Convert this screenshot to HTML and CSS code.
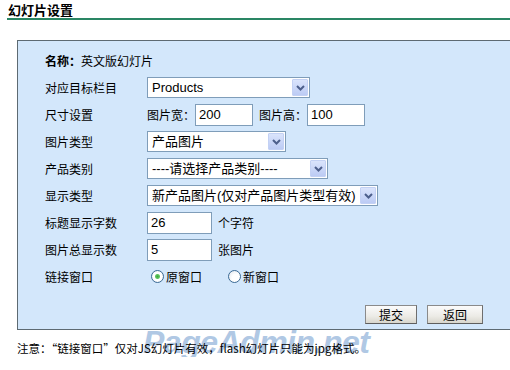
FILE: index.html
```html
<!DOCTYPE html>
<html lang="zh-CN">
<head>
    <meta charset="UTF-8">
    <title>幻灯片设置</title>
    <link rel="stylesheet" href="styles.css">
</head>
<body>
    <div class="page-title">幻灯片设置</div>

    <div class="panel">
        <div class="form">
            <div class="row name-row"><b>名称：</b>英文版幻灯片</div>

            <div class="row">
                <span class="label">对应目标栏目</span>
                <span class="select sel-column">
                    <select><option>Products</option></select>
                    <span class="arrow"><svg width="9" height="6" viewBox="0 0 9 6"><path d="M1 1 L4.5 4.5 L8 1" fill="none" stroke="#4d5f8c" stroke-width="2"/></svg></span>
                </span>
            </div>

            <div class="row">
                <span class="label">尺寸设置</span>
                <span class="field">图片宽：<input class="text w-size" type="text" value="200"></span>
                <span class="field gap">图片高：<input class="text w-size" type="text" value="100"></span>
            </div>

            <div class="row">
                <span class="label">图片类型</span>
                <span class="select sel-type">
                    <select><option>产品图片</option></select>
                    <span class="arrow"><svg width="9" height="6" viewBox="0 0 9 6"><path d="M1 1 L4.5 4.5 L8 1" fill="none" stroke="#4d5f8c" stroke-width="2"/></svg></span>
                </span>
            </div>

            <div class="row">
                <span class="label">产品类别</span>
                <span class="select sel-cat">
                    <select><option>----请选择产品类别----</option></select>
                    <span class="arrow"><svg width="9" height="6" viewBox="0 0 9 6"><path d="M1 1 L4.5 4.5 L8 1" fill="none" stroke="#4d5f8c" stroke-width="2"/></svg></span>
                </span>
            </div>

            <div class="row">
                <span class="label">显示类型</span>
                <span class="select sel-show">
                    <select><option>新产品图片(仅对产品图片类型有效)</option></select>
                    <span class="arrow"><svg width="9" height="6" viewBox="0 0 9 6"><path d="M1 1 L4.5 4.5 L8 1" fill="none" stroke="#4d5f8c" stroke-width="2"/></svg></span>
                </span>
            </div>

            <div class="row">
                <span class="label">标题显示字数</span>
                <input class="text w-num" type="text" value="26">
                <span class="unit">个字符</span>
            </div>

            <div class="row">
                <span class="label">图片总显示数</span>
                <input class="text w-num" type="text" value="5">
                <span class="unit">张图片</span>
            </div>

            <div class="row">
                <span class="label">链接窗口</span>
                <label class="radio"><input type="radio" name="target" checked>原窗口</label>
                <label class="radio"><input type="radio" name="target">新窗口</label>
            </div>
        </div>

        <div class="actions">
            <button class="btn btn-submit">提交</button>
            <button class="btn">返回</button>
        </div>
    </div>

    <div class="notice">
        <span class="watermark">PageAdmin.net</span>
        <span class="notice-text">注意：“链接窗口”仅对JS幻灯片有效，flash幻灯片只能为jpg格式。</span>
    </div>
</body>
</html>
```

FILE: styles.css
```css
/* Page base */
body {
    margin: 0;
    background-color: #ffffff;
    font-family: "Noto Sans CJK SC", "Liberation Sans", sans-serif;
    font-size: 12px;
    color: #000000;
}

/* Heading with green rule */
.page-title {
    margin-left: 7px;
    padding: 2px 0 0 1px;
    height: 16px;
    line-height: 16px;
    font-size: 13px;
    font-weight: bold;
    border-bottom: 2px solid #2a8664;
}

/* Blue settings box */
.panel {
    margin: 20px 0 0 17px;
    padding: 6px 27px 5px 27px;
    background-color: #d3e7fb;
    border: 1px solid #5d6a72;
    border-right: none;
}

.row {
    display: flex;
    align-items: center;
    height: 27px;
    white-space: nowrap;
}

.name-row b {
    font-weight: bold;
}

.label {
    width: 102px;
    flex-shrink: 0;
}

.field {
    display: flex;
    align-items: center;
}

.field.gap {
    margin-left: 6px;
}

/* Text inputs */
.text {
    box-sizing: border-box;
    height: 22px;
    margin: 0;
    padding: 0 3px;
    border: 1px solid #7f9db9;
    background: #ffffff;
    font-family: "Liberation Sans", "Noto Sans CJK SC", sans-serif;
    font-size: 13px;
    color: #000000;
}

.w-size {
    width: 58px;
}

.w-num {
    width: 65px;
}

.unit {
    margin-left: 6px;
}

/* Select boxes with XP style arrow button */
.select {
    box-sizing: border-box;
    display: flex;
    align-items: center;
    height: 21px;
    border: 1px solid #7f9db9;
    background: #ffffff;
}

.select select {
    flex: 1;
    min-width: 0;
    height: 19px;
    margin: 0;
    padding: 0 0 0 4px;
    border: none;
    outline: none;
    background: transparent;
    appearance: none;
    -webkit-appearance: none;
    font-family: "Liberation Sans", "Noto Sans CJK SC", sans-serif;
    font-size: 13px;
    color: #000000;
}

.arrow {
    box-sizing: border-box;
    display: flex;
    align-items: center;
    justify-content: center;
    width: 16px;
    height: 17px;
    margin-right: 1px;
    border: 1px solid #c3d1f4;
    background: linear-gradient(#dae4fc, #bccbf4);
    border-radius: 1px;
}

.sel-column { width: 163px; }
.sel-type { width: 139px; }
.sel-cat { width: 181px; }
.sel-show { width: 231px; }

/* Radio buttons */
.radio {
    display: flex;
    align-items: center;
    margin-right: 22px;
}

.radio input {
    appearance: none;
    -webkit-appearance: none;
    box-sizing: border-box;
    width: 13px;
    height: 13px;
    margin: 0 2px 0 4px;
    border: 1px solid #3b6a94;
    border-radius: 50%;
    background: radial-gradient(circle at 65% 65%, #ffffff 40%, #dce3ea 100%);
}

.radio input:checked {
    background: radial-gradient(circle, #3caa3c 0, #62c462 2px, #ffffff 3px, #ffffff 55%, #dce3ea 100%);
}

/* Buttons */
.actions {
    display: flex;
    justify-content: flex-end;
    gap: 10px;
    margin-top: 15px;
}

.btn {
    box-sizing: border-box;
    width: 56px;
    height: 19px;
    padding: 0;
    border: 1px solid #8a8a8a;
    border-bottom-color: #5e5e5e;
    border-right-color: #6e6e6e;
    background: linear-gradient(#fbfbfb, #ecebe6 60%, #d8d6cd);
    font-family: "Noto Sans CJK SC", sans-serif;
    font-size: 12px;
    color: #000000;
    line-height: 17px;
}

.btn-submit {
    width: 52px;
}

/* Bottom note with faint watermark */
.notice {
    position: relative;
    margin: 11px 0 0 17px;
    height: 16px;
    line-height: 14px;
}

.notice-text {
    position: relative;
    z-index: 1;
    font-size: 11.5px;
}

.watermark {
    position: absolute;
    left: 126px;
    top: -15px;
    font-family: "Liberation Sans", sans-serif;
    font-size: 32px;
    font-weight: bold;
    font-style: italic;
    line-height: 32px;
    color: #b0c8e4;
    letter-spacing: -0.5px;
}
```
